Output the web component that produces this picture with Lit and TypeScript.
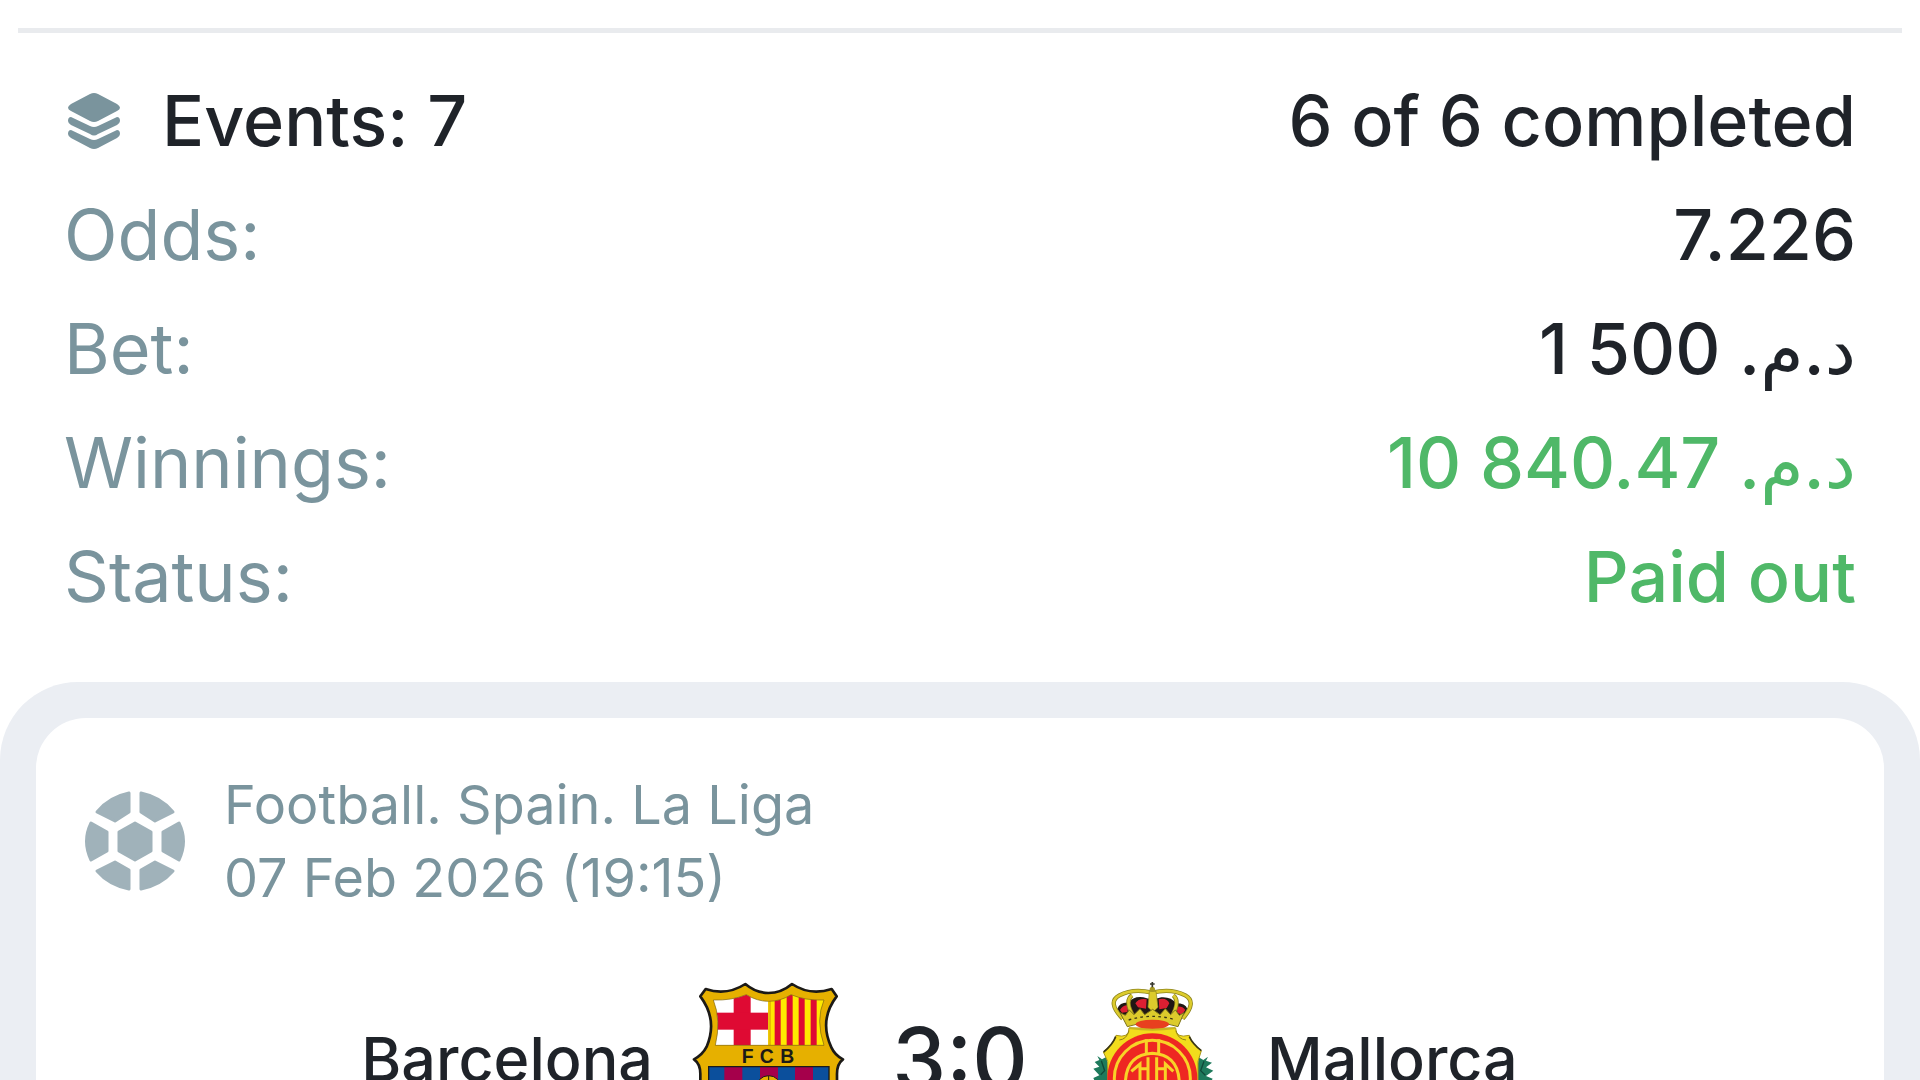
import { LitElement, html, css, svg } from 'lit';
import { customElement, property } from 'lit/decorators.js';

/**
 * TeamCrest - club badge, picked by team id
 */
@customElement('team-crest')
export class TeamCrest extends LitElement {
  @property() team = '';

  static styles = css`
    :host {
      display: block;
    }

    svg {
      display: block;
      width: 154px;
      height: 154px;
    }

    .initials {
      font-family: 'Liberation Sans', Arial, sans-serif;
      font-size: 58px;
      font-weight: 700;
      fill: #1c1a17;
    }
  `;

  renderBarcelona() {
    const stripes = [163, 270, 375];
    const bars = [314, 350, 386, 422];

    return html`
      <svg viewBox="63 66 462 462" role="img" aria-label="FC Barcelona">
        <defs>
          <clipPath id="upper">
            <path d="M130 120 Q185 122 229 104 Q262 124 295 124 Q332 124 363 104 Q406 122 462 120 Q436 180 462 256 L136 256 Q154 180 130 120Z" />
          </clipPath>
          <clipPath id="lower">
            <path d="M116 320H477V400Q474 450 400 470Q330 480 296 505Q262 480 192 470Q118 450 116 400Z" />
          </clipPath>
        </defs>
        <path
          d="M107 87 Q170 108 226 72 Q258 99 295 99 Q334 99 366 72 Q420 108 485 87 L500 109 Q446 180 484 262 Q495 286 519 298 Q500 312 501 345 L501 405 Q500 470 405 491 Q330 504 296 524 Q262 504 187 491 Q92 470 91 405 L91 345 Q92 312 72 298 Q98 284 110 260 Q144 180 91 109Z"
          fill="#e6b000"
          stroke="#1c1a17"
          stroke-width="8"
          stroke-linejoin="round"
        />
        <g clip-path="url(#upper)">
          <rect x="120" y="95" width="175" height="165" fill="#ffffff" />
          <rect x="191" y="95" width="51" height="165" fill="#df0a33" />
          <rect x="120" y="158" width="175" height="51" fill="#df0a33" />
          <rect x="295" y="95" width="175" height="165" fill="#ffe900" />
          <rect x="295" y="95" width="8" height="165" fill="#e8bd00" />
          ${bars.map((x) => svg`<rect x=${x} y="95" width="18" height="165" fill="#df0a33" />`)}
        </g>
        <path
          d="M130 120 Q185 122 229 104 Q262 124 295 124 Q332 124 363 104 Q406 122 462 120 Q436 180 462 256 L136 256 Q154 180 130 120Z"
          fill="none"
          stroke="#7d6510"
          stroke-width="2"
        />
        <text class="initials" y="308" x="215 269 331">FCB</text>
        <g clip-path="url(#lower)">
          <rect x="110" y="318" width="370" height="200" fill="#0b4f9c" />
          ${stripes.map((x) => svg`<rect x=${x} y="318" width="54" height="200" fill="#a5004b" />`)}
          <circle cx="296" cy="385" r="38" fill="#e6b000" stroke="#1c1a17" stroke-width="3" />
          <path d="M296 348v16l-18 12M296 364l18 12" fill="none" stroke="#1c1a17" stroke-width="3" />
        </g>
        <path
          d="M116 320H477V400Q474 450 400 470Q330 480 296 505Q262 480 192 470Q118 450 116 400Z"
          fill="none"
          stroke="#1c1a17"
          stroke-width="4"
        />
      </svg>
    `;
  }

  renderMallorca() {
    return html`
      <svg viewBox="45 66 462 462" role="img" aria-label="RCD Mallorca">
        <!-- laurels -->
        <g fill="#1e7a5c">
          <path d="M112 288l14 10 14-8 4 40-6 150-22-18 4-26-20-6 8-24-12-16 14-14-10-22 18-8-18-20 18-6-14-14 14-6z" />
          <path d="M444 290l-14 10-14-8-4 40 6 150 22-18-4-26 20-6-8-24 12-16-14-14 12-22-20-8 22-16-22-10 18-14-18-6z" />
        </g>
        <path d="M124 302l10 30-12 12M432 304l-10 28 14 14" fill="none" stroke="#0f4a3a" stroke-width="4" />

        <!-- shield behind the disc -->
        <path
          d="M207 204H347Q346 236 388 226Q388 246 424 272L414 304V430Q380 500 278 518Q176 500 143 430V304L130 276Q166 246 168 226Q208 236 207 204Z"
          fill="#f2dc1c"
          stroke="#a8951b"
          stroke-width="3"
        />
        <path d="M131 276Q158 254 167 230M424 272Q398 252 388 230" fill="none" stroke="#3b3714" stroke-width="5" />
        <path d="M207 212Q200 238 178 240M348 212Q354 238 378 240" fill="none" stroke="#8f801c" stroke-width="3" />

        <!-- disc and monogram -->
        <circle cx="277" cy="355" r="135" fill="#ee2722" />
        <g fill="none" stroke="#f8d327" stroke-width="9">
          <circle cx="277" cy="355" r="114" />
          <path d="M196 374Q196 284 277 280Q358 284 358 374" />
          <path d="M259 238V280M296 238V280" />
          <path d="M240 400V312L214 334M264 400V292M290 400V292M316 400V312L340 334" />
          <path d="M240 326H264M290 326H316" />
        </g>

        <!-- crown -->
        <path d="M172 146Q180 126 206 128Q220 108 250 112Q276 122 304 112Q334 110 348 130Q376 130 382 146L366 178Q276 150 190 178Z" fill="#201714" />
        <path d="M180 150q8-16 26-14l-4 20-16 2zM226 130q10-16 34-12l-2 28-24-4zM296 118q24-6 32 12l-8 14-22 4zM350 140q18-2 26 10l-10 14-14-6z" fill="#dc1f32" />
        <g fill="none" stroke="#8d841c" stroke-width="13">
          <path d="M188 176Q140 126 178 106Q220 84 276 98Q334 84 376 106Q412 126 368 176" />
          <path d="M222 172Q192 124 216 106M334 172Q362 124 340 106" />
        </g>
        <g fill="none" stroke="#dccb2c" stroke-width="8">
          <path d="M188 176Q140 126 178 106Q220 84 276 98Q334 84 376 106Q412 126 368 176" />
          <path d="M222 172Q192 124 216 106M334 172Q362 124 340 106" />
        </g>
        <path d="M268 94h20l6 48-15 14-15-14z" fill="#dccb2c" stroke="#8d841c" stroke-width="2" />
        <path
          d="M180 158l16 8 12-16 14 14 18-18 14 18 24-16 22 16 16-18 16 18 14-14 12 16 14-8-18 42Q277 174 202 200Z"
          fill="#dccb2c"
          stroke="#7b721b"
          stroke-width="3"
        />
        <path d="M206 180Q277 158 348 180" fill="none" stroke="#3b3714" stroke-width="4" stroke-dasharray="8 10" />
        <ellipse cx="277" cy="193" rx="50" ry="14" fill="#e8401f" />
        <path d="M208 204Q277 214 346 204" fill="none" stroke="#c9b721" stroke-width="6" />
        <circle cx="277" cy="88" r="8" fill="#a79a22" />
        <path d="M277 66v16M270 72h14" stroke="#35352c" stroke-width="5" />
      </svg>
    `;
  }

  render() {
    return this.team === 'barcelona' ? this.renderBarcelona() : this.renderMallorca();
  }
}

/**
 * MatchCard - league, kick-off time and score of one event of the bet
 */
@customElement('match-card')
export class MatchCard extends LitElement {
  @property() league = '';
  @property() date = '';
  @property() home = '';
  @property() away = '';
  @property() score = '';

  static styles = css`
    :host {
      display: block;
      padding: 50px 48px;
      border-radius: 50px;
      background: #ffffff;
    }

    header {
      display: flex;
      align-items: center;
      gap: 38px;
      color: #7a949d;
      font-size: 54px;
      line-height: 73px;
    }

    header svg {
      width: 102px;
      height: 102px;
      fill: #a0b2ba;
      stroke: #a0b2ba;
      stroke-width: 3px;
      stroke-linejoin: round;
    }

    p {
      margin: 0;
    }

    .teams {
      display: grid;
      grid-template-columns: 1fr auto 230px auto 1fr;
      align-items: center;
      margin-top: 68px;
      font-size: 61px;
      font-weight: 500;
    }

    .home {
      padding-right: 38px;
      text-align: right;
    }

    .away {
      padding-left: 38px;
    }

    .score {
      font-size: 86px;
      text-align: center;
    }
  `;

  render() {
    return html`
      <header>
        <svg viewBox="-1 -1 102 102" aria-hidden="true">
          <path d="M50 32L66 41V60L50 69L34 60V41Z" />
          <path d="M44 2V21L30 30L12 21Q24 6 44 2Z" />
          <path d="M56 2V21L70 30L88 21Q76 6 56 2Z" />
          <path d="M6 32L22 41V60L6 69Q-3 50 6 32Z" />
          <path d="M94 32L78 41V60L94 69Q103 50 94 32Z" />
          <path d="M44 98V79L30 71L12 80Q24 94 44 98Z" />
          <path d="M56 98V79L70 71L88 80Q76 94 56 98Z" />
        </svg>
        <div>
          <p>${this.league}</p>
          <p>${this.date}</p>
        </div>
      </header>
      <div class="teams">
        <span class="home">${this.home}</span>
        <team-crest team="barcelona"></team-crest>
        <span class="score">${this.score}</span>
        <team-crest team="mallorca"></team-crest>
        <span class="away">${this.away}</span>
      </div>
    `;
  }
}

/**
 * AppRoot - bet slip details with the list of its events
 */
@customElement('app-root')
export class AppRoot extends LitElement {
  static styles = css`
    :host {
      display: flex;
      flex-direction: column;
      height: 100vh;
      overflow: hidden;
      background: #ffffff;
      color: #1f2329;
      font-family: Inter, 'DejaVu Sans', sans-serif;
    }

    .summary {
      flex: none;
      margin: 28px 18px 0;
      padding: 31px 46px 48px;
      border-top: 5px solid #e9ebee;
      font-size: 70px;
      line-height: 114px;
    }

    dl {
      margin: 0;
    }

    .row {
      display: flex;
      justify-content: space-between;
    }

    dt {
      color: #7a949d;
    }

    dd {
      margin: 0;
      font-weight: 500;
    }

    .row.total dt {
      display: flex;
      align-items: center;
      gap: 38px;
      color: #1f2329;
      font-weight: 500;
    }

    .row.total svg {
      width: 60px;
      height: 56px;
      fill: #7a949d;
    }

    .won dd {
      color: #4fb868;
    }

    .events {
      flex: 1 0 auto;
      padding: 36px;
      border-radius: 78px 78px 0 0;
      background: #ebeef3;
    }
  `;

  render() {
    return html`
      <section class="summary">
        <dl>
          <div class="row total">
            <dt>
              <svg viewBox="-4 0 60 56" aria-hidden="true">
                <path d="M22 1Q26 -1 30 1L49 11Q55 15 49 18L30 28Q26 30 22 28L3 18Q-3 15 3 11Z" />
                <path d="M3 24L22 33Q26 35 30 33L49 24Q52 24 52 28Q52 30 49 32L30 41Q26 44 22 41L3 32Q0 30 0 28Q0 24 3 24Z" />
                <path d="M3 37L22 46Q26 48 30 46L49 37Q52 37 52 41Q52 43 49 45L30 55Q26 57 22 55L3 45Q0 43 0 41Q0 37 3 37Z" />
              </svg>
              Events: 7
            </dt>
            <dd>6 of 6 completed</dd>
          </div>
          <div class="row">
            <dt>Odds:</dt>
            <dd>7.226</dd>
          </div>
          <div class="row">
            <dt>Bet:</dt>
            <dd>1 500 <bdi dir="rtl">د.م.</bdi></dd>
          </div>
          <div class="row won">
            <dt>Winnings:</dt>
            <dd>10 840.47 <bdi dir="rtl">د.م.</bdi></dd>
          </div>
          <div class="row won">
            <dt>Status:</dt>
            <dd>Paid out</dd>
          </div>
        </dl>
      </section>
      <main class="events">
        <match-card
          league="Football. Spain. La Liga"
          date="07 Feb 2026 (19:15)"
          home="Barcelona"
          away="Mallorca"
          score="3:0"
        ></match-card>
      </main>
    `;
  }
}
